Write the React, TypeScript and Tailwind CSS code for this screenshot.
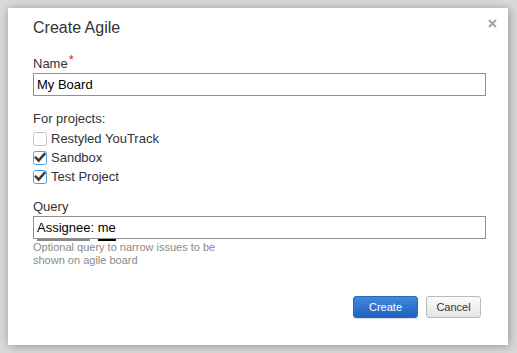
import React from "react";

const font = { fontFamily: '"Liberation Sans", Arial, sans-serif' };

function CheckBox({ checked }: { checked: boolean }) {
  return (
    <svg width="14" height="14" viewBox="0 0 14 14" className="shrink-0">
      <rect
        x="0.5"
        y="0.5"
        width="13"
        height="13"
        rx="2"
        fill="#fff"
        stroke={checked ? "#4b9fe4" : "#c4c4c4"}
      />
      {checked && (
        <path
          d="M2.8 6.6 L5.6 9.6 L11.4 3"
          fill="none"
          stroke="#3a3a3a"
          strokeWidth="2.4"
          strokeLinecap="square"
        />
      )}
    </svg>
  );
}

export default function App() {
  const projects = [
    { name: "Restyled YouTrack", checked: false },
    { name: "Sandbox", checked: true },
    { name: "Test Project", checked: true },
  ];
  return (
    <div
      className="w-[517px] h-[353px] bg-[#d9d9d9] pt-[8px] pl-[8px]"
      style={font}
    >
      <div className="w-[500px] h-[337px] bg-white shadow-[1px_1px_9px_rgba(0,0,0,0.32)] flex flex-col pl-[25px] pr-[22px] pt-[10px]">
        <div className="flex items-start justify-between">
          <div className="text-[16px] leading-[20px] text-[#333]">Create Agile</div>
          <svg width="9" height="9" viewBox="0 0 9 9" className="mt-[1px] -mr-[11px]">
            <path d="M1 1 L8 8 M8 1 L1 8" stroke="#a3a3a3" strokeWidth="2" />
          </svg>
        </div>

        <div className="mt-[18px] text-[13px] leading-[15px] text-[#333]">
          Name<span className="text-[#e8201a] relative -top-[4px] ml-[1px]">*</span>
        </div>
        <div className="mt-[2px] h-[23px] border border-[#8f8f8f] flex items-center pl-[3px] text-[13px] leading-[15px] text-black">
          My Board
        </div>

        <div className="mt-[15px] text-[13px] leading-[15px] text-[#333]">For projects:</div>
        <div className="mt-[3px] flex flex-col">
          {projects.map((p) => (
            <div key={p.name} className="h-[19px] flex items-center">
              <CheckBox checked={p.checked} />
              <span className="ml-[4px] text-[13px] leading-[15px] text-[#333]">{p.name}</span>
            </div>
          ))}
        </div>

        <div className="mt-[13px] text-[13px] leading-[15px] text-[#333]">Query</div>
        <div className="mt-[2px] h-[23px] border border-[#8f8f8f] flex items-center pl-[3px] text-[13px] leading-[15px] text-black">
          <span className="relative">
            Assignee
            <span className="absolute left-0 right-0 top-[19px] h-[2px] bg-[#8a8a8a]" />
          </span>
          <span>:&nbsp;</span>
          <span className="relative">
            me
            <span className="absolute left-0 right-0 top-[19px] h-[2px] bg-black" />
          </span>
        </div>
        <div className="mt-[2px] text-[11px] leading-[13px] text-[#8a8a8a]">
          Optional query to narrow issues to be
          <br />
          shown on agile board
        </div>

        <div className="mt-[29px] flex justify-end gap-[8px] pr-[5px]">
          <button className="w-[65px] h-[22px] rounded-[3px] border border-[#2a66be] bg-gradient-to-b from-[#4288dc] to-[#1e62c2] text-white text-[11px] leading-[13px] shadow-[0_1px_1px_rgba(0,0,0,0.15)]">
            Create
          </button>
          <button className="w-[55px] h-[22px] rounded-[3px] border border-[#b9b9b9] bg-gradient-to-b from-[#fbfbfb] to-[#e4e4e4] text-[#333] text-[11px] leading-[13px]">
            Cancel
          </button>
        </div>
      </div>
    </div>
  );
}
